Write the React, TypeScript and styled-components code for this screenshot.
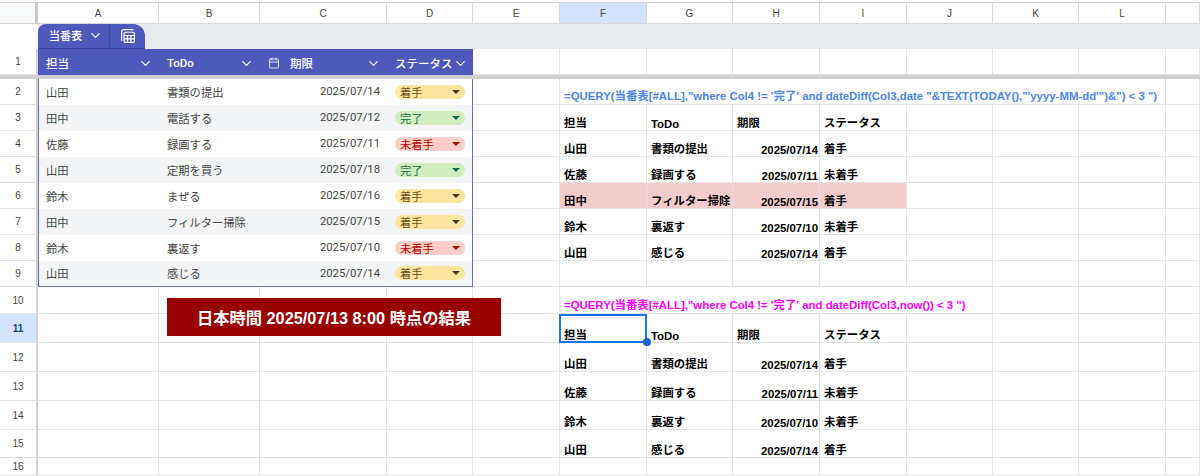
import styled, { createGlobalStyle } from 'styled-components';
import { ChevronDown, Calendar } from 'lucide-react';

const GlobalStyle = createGlobalStyle`
  html, body {
    margin: 0;
    padding: 0;
    height: 476px;
    overflow: hidden;
    background: #fff;
  }
  * {
    box-sizing: border-box;
  }
`;

const LINE = '#e2e3e3';
const HEADER_BLUE = '#4e59bb';
const HEADER_DARK = '#3f49a3';
const FRAME = '#6c71a8';
const SANS = `"Liberation Sans", "Noto Sans CJK JP", sans-serif`;
const ROBOTO = `Roboto, "Noto Sans CJK JP", sans-serif`;

const Sheet = styled.div`
  position: relative;
  width: 1200px;
  height: 476px;
  overflow: hidden;
  display: grid;
  grid-template-columns: 38px 121px 101px 127px 86px 87px 87px 86px 87px 87px 86px 86px 87px 34px;
  grid-template-rows: 3px 21px 25px 26px 4px repeat(8, 26px) 27px 29px 29px 29px 29px 28px 18px;
  font-family: ${SANS};
  font-size: 11.4px;
  color: #000;
`;

const TopGap = styled.div`
  grid-column: 1 / -1;
  border-bottom: 1px solid #d4d4d4;
`;

const Corner = styled.div`
  background: #f8f9fa;
  border-right: 3px solid #c7c7c7;
  border-bottom: 1px solid #d4d4d4;
`;

const ColHeader = styled.div<{ $active?: boolean }>`
  display: flex;
  align-items: center;
  justify-content: center;
  background: ${(p) => (p.$active ? '#d3e3fd' : '#fff')};
  border-right: 1px solid #d9d9d9;
  border-bottom: 1px solid #d9d9d9;
  font-family: ${SANS};
  font-size: 10px;
  color: #444;
`;

const RowHeader = styled.div<{ $active?: boolean }>`
  display: flex;
  align-items: center;
  justify-content: center;
  background: ${(p) => (p.$active ? '#d3e3fd' : '#fff')};
  border-right: 2px solid #d2d2d2;
  border-bottom: 1px solid ${LINE};
  font-size: 10px;
  font-weight: ${(p) => (p.$active ? 700 : 400)};
  color: ${(p) => (p.$active ? '#1f3f77' : '#444')};
`;

const Band = styled.div`
  grid-column: 2 / -1;
  display: flex;
  align-items: stretch;
  background: #e8eaed;
`;

const TabBlank = styled.div`
  background: #fff;
`;

const Tab = styled.div`
  display: flex;
  width: 107px;
  background: ${HEADER_BLUE};
  border-bottom: 1px solid ${HEADER_DARK};
  border-radius: 8px 12px 0 0;
  color: #fff;
  font-family: ${ROBOTO};
  font-size: 11px;
  font-weight: 500;
`;

const TabName = styled.div`
  display: flex;
  align-items: center;
  gap: 6px;
  width: 72px;
  padding: 0 0 2px 11px;
  border-right: 1px solid ${HEADER_DARK};
`;

const TabIcon = styled.div`
  flex: 1;
  display: flex;
  align-items: center;
  justify-content: center;
  padding-bottom: 1px;
`;

const HeadCell = styled.div`
  display: flex;
  align-items: center;
  justify-content: space-between;
  padding: 2px 6px 0 8px;
  background: ${HEADER_BLUE};
  color: #fff;
  font-family: ${ROBOTO};
  font-size: 11.5px;
  font-weight: 500;
  white-space: nowrap;
`;

const HeadLabel = styled.span`
  display: flex;
  align-items: center;
  gap: 10px;
`;

const Chevron = styled(ChevronDown).attrs({ size: 15, strokeWidth: 1.8 })`
  flex-shrink: 0;
`;

const FreezeBar = styled.div`
  grid-column: 1 / -1;
  background: #cfcfcf;
`;

const TableCell = styled.div<{ $striped: boolean; $left?: boolean; $right?: boolean; $last?: boolean; $end?: boolean }>`
  display: flex;
  align-items: center;
  justify-content: ${(p) => (p.$end ? 'flex-end' : 'flex-start')};
  padding: 0 ${(p) => (p.$end || p.$right ? '7px' : '0')} 1px ${(p) => (p.$left ? '7px' : '8px')};
  background: ${(p) => (p.$striped ? '#f3f5f6' : '#fff')};
  border-left: ${(p) => (p.$left ? `1px solid ${FRAME}` : 'none')};
  border-right: ${(p) => (p.$right ? `1px solid ${FRAME}` : 'none')};
  border-bottom: ${(p) => (p.$last ? `1px solid ${FRAME}` : 'none')};
  font-family: ${ROBOTO};
  font-size: 11.3px;
  color: #444;
`;

const chipColors = {
  着手: { bg: '#ffe5a0', fg: '#6b4f12', caret: '#473821' },
  完了: { bg: '#d4edbc', fg: '#11734b', caret: '#11734b' },
  未着手: { bg: '#ffcfc9', fg: '#b10202', caret: '#b10202' },
};
type Status = keyof typeof chipColors;

const Chip = styled.div<{ $status: Status }>`
  display: flex;
  flex: 1;
  align-items: center;
  justify-content: space-between;
  height: 14px;
  padding: 0 5px 0 5px;
  border-radius: 7px;
  background: ${(p) => chipColors[p.$status].bg};
  color: ${(p) => chipColors[p.$status].fg};
`;

const Caret = styled.span<{ $status: Status }>`
  width: 0;
  height: 0;
  border-left: 4px solid transparent;
  border-right: 4px solid transparent;
  border-top: 4px solid ${(p) => chipColors[p.$status].caret};
`;

const Cell = styled.div<{ $span?: number; $fill?: boolean; $end?: boolean }>`
  position: relative;
  display: flex;
  align-items: flex-end;
  justify-content: ${(p) => (p.$end ? 'flex-end' : 'flex-start')};
  grid-column: span ${(p) => p.$span ?? 1};
  padding: 0 ${(p) => (p.$end ? '1px' : '3px')} 0 4px;
  background: ${(p) => (p.$fill ? '#f4cccc' : 'transparent')};
  border-right: 1px solid ${LINE};
  border-bottom: 1px solid ${LINE};
  font-weight: 700;
  white-space: nowrap;
`;

const Formula = styled.span<{ $color: string }>`
  color: ${(p) => p.$color};
  padding-bottom: 1px;
`;

const Selection = styled.div`
  position: absolute;
  z-index: 2;
  inset: 0 -1px -1px -1px;
  border: 2px solid #1a73e8;
  pointer-events: none;

  &::after {
    content: '';
    position: absolute;
    right: -6px;
    bottom: -5px;
    width: 8px;
    height: 8px;
    border-radius: 50%;
    background: #1a64d0;
  }
`;

const Banner = styled.div`
  position: absolute;
  left: 167px;
  top: 298px;
  width: 334px;
  height: 38px;
  display: flex;
  align-items: center;
  justify-content: center;
  background: #980000;
  color: #fff;
  font-family: ${SANS};
  font-size: 16.3px;
  font-weight: 700;
`;

const columns = ['A', 'B', 'C', 'D', 'E', 'F', 'G', 'H', 'I', 'J', 'K', 'L', ''];

const tableRows: { n: number; who: string; todo: string; date: string; status: Status }[] = [
  { n: 2, who: '山田', todo: '書類の提出', date: '2025/07/14', status: '着手' },
  { n: 3, who: '田中', todo: '電話する', date: '2025/07/12', status: '完了' },
  { n: 4, who: '佐藤', todo: '録画する', date: '2025/07/11', status: '未着手' },
  { n: 5, who: '山田', todo: '定期を買う', date: '2025/07/18', status: '完了' },
  { n: 6, who: '鈴木', todo: 'まぜる', date: '2025/07/16', status: '着手' },
  { n: 7, who: '田中', todo: 'フィルター掃除', date: '2025/07/15', status: '着手' },
  { n: 8, who: '鈴木', todo: '裏返す', date: '2025/07/10', status: '未着手' },
  { n: 9, who: '山田', todo: '感じる', date: '2025/07/14', status: '着手' },
];

const TABLE_FORMULA = `=QUERY(当番表[#ALL],"where Col4 != '完了' and dateDiff(Col3,date "&TEXT(TODAY(),"'yyyy-MM-dd'")&") < 3 ")`;
const NOW_FORMULA = `=QUERY(当番表[#ALL],"where Col4 != '完了' and dateDiff(Col3,now()) < 3 ")`;

const HEAD = ['担当', 'ToDo', '期限', 'ステータス'];

// right-hand query results, keyed by sheet row
const results: Record<number, string[]> = {
  3: HEAD,
  4: ['山田', '書類の提出', '2025/07/14', '着手'],
  5: ['佐藤', '録画する', '2025/07/11', '未着手'],
  6: ['田中', 'フィルター掃除', '2025/07/15', '着手'],
  7: ['鈴木', '裏返す', '2025/07/10', '未着手'],
  8: ['山田', '感じる', '2025/07/14', '着手'],
  11: HEAD,
  12: ['山田', '書類の提出', '2025/07/14', '着手'],
  13: ['佐藤', '録画する', '2025/07/11', '未着手'],
  14: ['鈴木', '裏返す', '2025/07/10', '未着手'],
  15: ['山田', '感じる', '2025/07/14', '着手'],
};

const Blank = ({ count }: { count: number }) => (
  <>
    {Array.from({ length: count }, (_, i) => (
      <Cell key={i} />
    ))}
  </>
);

const ResultCells = ({ row }: { row: number }) => {
  if (row === 2) {
    return (
      <>
        <Cell $span={7}>
          <Formula $color="#4a86e8">{TABLE_FORMULA}</Formula>
        </Cell>
        <Cell />
      </>
    );
  }
  if (row === 10) {
    return (
      <>
        <Cell $span={5}>
          <Formula $color="#ff00ff">{NOW_FORMULA}</Formula>
        </Cell>
        <Blank count={3} />
      </>
    );
  }
  const values = results[row];
  if (!values) return <Blank count={8} />;
  return (
    <>
      {values.map((value, i) => (
        <Cell key={i} $end={i === 2 && value.startsWith('2025')} $fill={row === 6}>
          {value}
          {row === 11 && i === 0 && <Selection />}
        </Cell>
      ))}
      <Blank count={4} />
    </>
  );
};

const SheetIcon = () => (
  <svg width="16" height="16" viewBox="0 0 15 15" fill="none" stroke="#fff" strokeWidth="1.1">
    <path d="M12.5 1.5H3.5A2 2 0 0 0 1.5 3.5V12" />
    <rect x="3.8" y="4" width="9.7" height="9.5" rx="1.2" />
    <path d="M3.8 7H13.5M3.8 10.2H13.5M7 7V13.5M10.2 7V13.5" />
  </svg>
);

const App = () => {
  return (
    <>
      <GlobalStyle />
      <Sheet>
        <TopGap />
        <Corner />
        {columns.map((c, i) => (
          <ColHeader key={i} $active={c === 'F'}>
            {c}
          </ColHeader>
        ))}

        <TabBlank />
        <Band>
          <Tab>
            <TabName>
              当番表
              <Chevron />
            </TabName>
            <TabIcon>
              <SheetIcon />
            </TabIcon>
          </Tab>
        </Band>

        <RowHeader>1</RowHeader>
        <HeadCell>
          担当
          <Chevron />
        </HeadCell>
        <HeadCell>
          ToDo
          <Chevron />
        </HeadCell>
        <HeadCell>
          <HeadLabel>
            <Calendar size={12} strokeWidth={1.6} />
            期限
          </HeadLabel>
          <Chevron />
        </HeadCell>
        <HeadCell>
          ステータス
          <Chevron />
        </HeadCell>
        <Blank count={9} />

        <FreezeBar />

        {tableRows.map((r, i) => {
          const striped = i % 2 === 1;
          const last = i === tableRows.length - 1;
          return (
            <div key={r.n} style={{ display: 'contents' }}>
              <RowHeader>{r.n}</RowHeader>
              <TableCell $striped={striped} $left $last={last}>
                {r.who}
              </TableCell>
              <TableCell $striped={striped} $last={last}>
                {r.todo}
              </TableCell>
              <TableCell $striped={striped} $last={last} $end>
                {r.date}
              </TableCell>
              <TableCell $striped={striped} $right $last={last}>
                <Chip $status={r.status}>
                  {r.status}
                  <Caret $status={r.status} />
                </Chip>
              </TableCell>
              <Cell />
              <ResultCells row={r.n} />
            </div>
          );
        })}

        {[10, 11, 12, 13, 14, 15, 16].map((n) => (
          <div key={n} style={{ display: 'contents' }}>
            <RowHeader $active={n === 11}>{n}</RowHeader>
            <Blank count={5} />
            <ResultCells row={n} />
          </div>
        ))}

        <Banner>日本時間 2025/07/13 8:00 時点の結果</Banner>
      </Sheet>
    </>
  );
};

export default App;
